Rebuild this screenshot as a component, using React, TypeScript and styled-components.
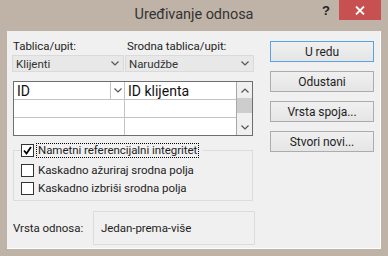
import styled, { createGlobalStyle } from 'styled-components';

const GlobalStyle = createGlobalStyle`
  html, body { margin: 0; padding: 0; }
  body {
    font-family: Roboto, "Noto Sans", "Liberation Sans", sans-serif;
    font-size: 11.5px;
    letter-spacing: -0.05px;
    color: #1e1e1e;
  }
`;

const Window = styled.div`
  width: 388px;
  height: 256px;
  box-sizing: border-box;
  background: #bfb3a7;
  display: flex;
  flex-direction: column;
  padding: 0 7px 7px 7px;
`;

const TitleBar = styled.div`
  height: 31px;
  display: grid;
  grid-template-columns: 1fr auto 1fr;
  align-items: start;
`;

const Title = styled.div`
  grid-column: 2;
  font-size: 14.5px;
  line-height: 30px;
  color: #333;
`;

const Controls = styled.div`
  grid-column: 3;
  justify-self: end;
  display: flex;
`;

const CaptionButton = styled.div<{ $close?: boolean }>`
  width: ${(p) => (p.$close ? 42 : 26)}px;
  height: 20px;
  display: flex;
  align-items: center;
  justify-content: center;
  background: ${(p) => (p.$close ? '#c75050' : 'transparent')};
  font-family: "Liberation Sans", sans-serif;
  font-weight: bold;
  font-size: 13px;
  color: #222;
`;

const Client = styled.div`
  flex: 1;
  display: flex;
  background: #f0f0f0;
  border-right: 1px solid #fff;
  border-bottom: 1px solid #fff;
  padding: 8px 6px 0 5px;
`;

const LeftCol = styled.div`
  width: 243px;
  display: flex;
  flex-direction: column;
`;

const RightCol = styled.div`
  margin-left: auto;
  margin-top: 2px;
  display: flex;
  flex-direction: column;
  gap: 9px;
`;

const Pair = styled.div`
  display: grid;
  grid-template-columns: 112px 129px;
  column-gap: 1px;
`;

const Label = styled.div<{ $indent?: number; $width?: number }>`
  line-height: 15px;
  padding-left: ${(p) => p.$indent ?? 0}px;
  width: ${(p) => (p.$width ? `${p.$width}px` : 'auto')};
  box-sizing: border-box;
  white-space: nowrap;
`;

const Combo = styled.div`
  margin-top: 1px;
  height: 17px;
  box-sizing: border-box;
  display: flex;
  align-items: center;
  justify-content: space-between;
  padding: 0 4px 0 3px;
  background: #e8e8e8;
  border: 1px solid #dadada;
  color: #333;
`;

const TableBox = styled.div`
  margin: 9px 0 0 1px;
  width: 240px;
  box-sizing: border-box;
  border: 1px solid #6e6e6e;
  display: flex;
  background: #fff;
`;

const Cells = styled.div`
  display: grid;
  grid-template-columns: 110px 111px;
  grid-auto-rows: 17px;
  gap: 1px;
  background: #c3c3c3;
  border-right: 1px solid #a8a8a8;
`;

const Cell = styled.div`
  background: #fff;
  display: flex;
  align-items: center;
  font-size: 14px;
  letter-spacing: 0;
  color: #111;
  padding-left: 3px;
  white-space: nowrap;
`;

const CellDrop = styled.div`
  margin-left: auto;
  width: 13px;
  height: 17px;
  border-left: 1px solid #c3c3c3;
  display: flex;
  align-items: center;
  justify-content: center;
`;

const Scrollbar = styled.div`
  width: 15px;
  display: flex;
  flex-direction: column;
  background: #f0f0f0;
`;

const ScrollArrow = styled.div`
  height: 16px;
  display: flex;
  align-items: center;
  justify-content: center;
`;

const Thumb = styled.div`
  height: 15px;
  background: #cdcdcd;
`;

const Track = styled.div`
  flex: 1;
`;

const Group = styled.fieldset`
  margin: 7px 0 0 1px;
  width: 240px;
  box-sizing: border-box;
  border: 1px solid #dcdcdc;
  padding: 3px 0 3px 7px;
  display: flex;
  flex-direction: column;
`;

const Legend = styled.legend`
  padding: 0 4px 0 0;
  height: 15px;
  display: flex;
  align-items: center;
`;

const CheckRow = styled.div`
  height: 18px;
  display: flex;
  align-items: center;
`;

const Box = styled.div`
  width: 13px;
  height: 13px;
  box-sizing: border-box;
  border: 1px solid #333;
  background: #fff;
  display: flex;
  align-items: center;
  justify-content: center;
`;

const CheckText = styled.span<{ $focus?: boolean }>`
  margin-left: 2px;
  padding: 0 1px;
  line-height: 13px;
  border: 1px ${(p) => (p.$focus ? 'dotted #000' : 'solid transparent')};
  white-space: nowrap;
`;

const RelationRow = styled.div`
  margin-top: 10px;
  display: flex;
  align-items: center;
`;

const ValueBox = styled.div`
  width: 162px;
  height: 34px;
  box-sizing: border-box;
  border: 1px solid #dcdcdc;
  display: flex;
  align-items: center;
  padding-left: 7px;
`;

const Button = styled.div<{ $default?: boolean }>`
  width: 104px;
  height: 21px;
  box-sizing: border-box;
  display: flex;
  align-items: center;
  justify-content: center;
  font-size: 12px;
  background: linear-gradient(#f0f0f0, #e5e5e5);
  border: 1px solid ${(p) => (p.$default ? '#5aa2e6' : '#acacac')};
  color: #1e1e1e;
`;

const Chevron = ({ up }: { up?: boolean }) => (
  <svg width="8" height="5" viewBox="0 0 8 5">
    <path
      d={up ? 'M0.5 4.5 L4 1 L7.5 4.5' : 'M0.5 0.5 L4 4 L7.5 0.5'}
      fill="none"
      stroke="#555"
      strokeWidth="1.2"
    />
  </svg>
);

const Check = () => (
  <svg width="9" height="9" viewBox="0 0 9 9">
    <path d="M1 4.5 L3.5 7.5 L8 1" fill="none" stroke="#000" strokeWidth="1.8" />
  </svg>
);

const CloseGlyph = () => (
  <svg width="10" height="9" viewBox="0 0 10 9">
    <path d="M1 0.5 L9 8.5 M9 0.5 L1 8.5" stroke="#fff" strokeWidth="1.8" />
  </svg>
);

export default function App() {
  return (
    <>
      <GlobalStyle />
      <Window>
        <TitleBar>
          <Title>Uređivanje odnosa</Title>
          <Controls>
            <CaptionButton>?</CaptionButton>
            <CaptionButton $close>
              <CloseGlyph />
            </CaptionButton>
          </Controls>
        </TitleBar>
        <Client>
          <LeftCol>
            <Pair>
              <Label $indent={1}>Tablica/upit:</Label>
              <Label $indent={2}>Srodna tablica/upit:</Label>
            </Pair>
            <Pair>
              <Combo>
                Klijenti
                <Chevron />
              </Combo>
              <Combo>
                Narudžbe
                <Chevron />
              </Combo>
            </Pair>
            <TableBox>
              <Cells>
                <Cell>
                  ID
                  <CellDrop>
                    <Chevron />
                  </CellDrop>
                </Cell>
                <Cell>ID klijenta</Cell>
                <Cell />
                <Cell />
                <Cell />
                <Cell />
              </Cells>
              <Scrollbar>
                <ScrollArrow>
                  <Chevron up />
                </ScrollArrow>
                <Thumb />
                <Track />
                <ScrollArrow>
                  <Chevron />
                </ScrollArrow>
              </Scrollbar>
            </TableBox>
            <Group>
              <Legend>
                <Box>
                  <Check />
                </Box>
                <CheckText $focus>Nametni referencijalni integritet</CheckText>
              </Legend>
              <CheckRow>
                <Box />
                <CheckText>Kaskadno ažuriraj srodna polja</CheckText>
              </CheckRow>
              <CheckRow>
                <Box />
                <CheckText>Kaskadno izbriši srodna polja</CheckText>
              </CheckRow>
            </Group>
            <RelationRow>
              <Label $indent={1} $width={81}>Vrsta odnosa:</Label>
              <ValueBox>Jedan-prema-više</ValueBox>
            </RelationRow>
          </LeftCol>
          <RightCol>
            <Button $default>U redu</Button>
            <Button>Odustani</Button>
            <Button>Vrsta spoja...</Button>
            <Button>Stvori novi...</Button>
          </RightCol>
        </Client>
      </Window>
    </>
  );
}
